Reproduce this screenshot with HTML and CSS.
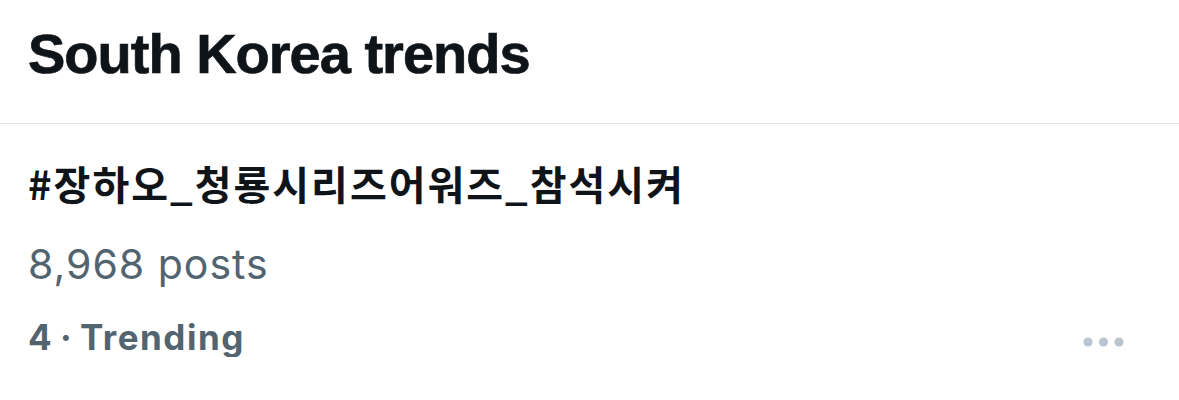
FILE: index.html
```html
<!DOCTYPE html>
<html lang="ko">
<head>
    <meta charset="UTF-8">
    <meta name="viewport" content="width=device-width, initial-scale=1.0">
    <title>South Korea trends</title>
    <link rel="stylesheet" href="styles.css">
</head>
<body>
    <div class="panel">
        <div class="panel-header">
            <h1>South Korea trends</h1>
        </div>

        <div class="trend">
            <div class="trend-name">#장하오_청룡시리즈어워즈_참석시켜</div>
            <div class="trend-count">8,968 posts</div>
            <div class="trend-meta">
                <span>4 · Trending</span>
                <button class="more" aria-label="More">
                    <svg width="41" height="10" viewBox="0 0 41 10">
                        <circle cx="5" cy="5" r="4.6"></circle>
                        <circle cx="20.5" cy="5" r="4.6"></circle>
                        <circle cx="36" cy="5" r="4.6"></circle>
                    </svg>
                </button>
            </div>
        </div>
    </div>
</body>
</html>
```

FILE: styles.css
```css
body {
    margin: 0;
    background-color: #ffffff;
    font-family: 'Liberation Sans', Arial, sans-serif;
}

.panel {
    width: 1179px;
}

.panel-header {
    padding: 26px 28px 41px;
    border-bottom: 1px solid #e3e6e8;
}

.panel-header h1 {
    margin: 0;
    font-size: 56px;
    line-height: 56px;
    font-weight: bold;
    letter-spacing: -1px;
    color: #0f1419;
    -webkit-text-stroke: 0.7px #0f1419;
}

.trend {
    padding: 35px 55px 0 28px;
}

.trend-name {
    font-family: 'Noto Sans CJK KR', sans-serif;
    font-size: 40px;
    line-height: 48px;
    font-weight: bold;
    letter-spacing: 2px;
    color: #0f1419;
}

.trend-count {
    margin-top: 35px;
    font-family: Inter, 'Liberation Sans', sans-serif;
    font-size: 41px;
    line-height: 44px;
    letter-spacing: 1px;
    color: #536471;
}

.trend-meta {
    margin-top: 31px;
    display: flex;
    justify-content: space-between;
    align-items: center;
    font-family: Inter, 'Liberation Sans', sans-serif;
    font-size: 35px;
    line-height: 40px;
    font-weight: bold;
    letter-spacing: 1.5px;
    word-spacing: -3px;
    color: #536471;
}

.more {
    margin-top: 10px;
    border: none;
    background: none;
    padding: 0;
    display: flex;
}

.more svg {
    fill: #b8c4cf;
}
```
